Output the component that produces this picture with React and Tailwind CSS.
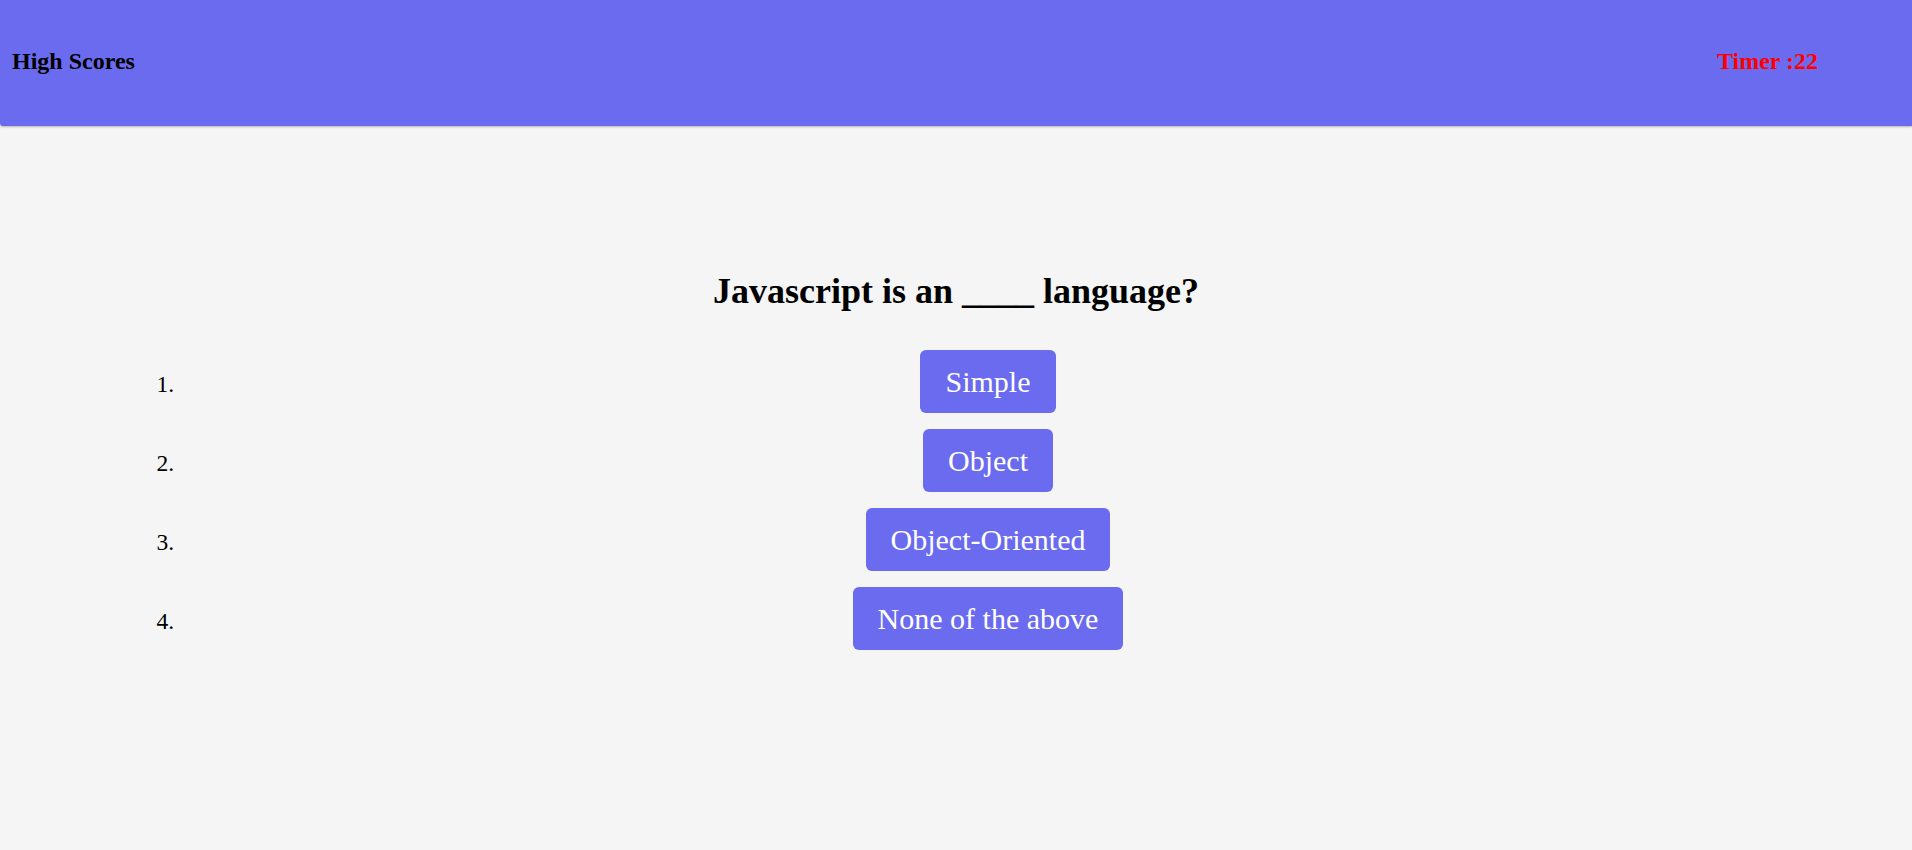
import { useState } from 'react'

const choices = ['Simple', 'Object', 'Object-Oriented', 'None of the above']

export default function App() {
  const [timer] = useState(22)

  return (
    <div className="min-h-screen bg-[#f5f5f5] font-['Liberation_Serif','Times_New_Roman',serif] text-black">
      {/* Top bar */}
      <header className="h-[126px] bg-[#6a6bef] flex items-center justify-between pl-3 pr-[94px] rounded-bl-[3px] shadow-[0_1px_2px_rgba(0,0,0,0.25)]">
        <h3 className="text-[24px] font-bold leading-[27px] -mt-1">High Scores</h3>
        <h3 className="text-[24px] font-bold leading-[27px] -mt-1 text-[#ff0000]">Timer :{timer}</h3>
      </header>

      {/* Question */}
      <main className="pt-[145px]">
        <h2 className="text-center text-[36px] font-bold leading-[40px]">Javascript is an ____ language?</h2>
        <ol className="list-decimal list-outside ml-[180px] mr-[116px] mt-[39px]">
          {choices.map(c => (
            <li key={c} className="text-center text-[23.5px] leading-[1.15] mb-4">
              <button className="inline-block bg-[#6a6bef] text-white text-[30px] leading-[35px] px-[25px] py-[14px] rounded-md">
                {c}
              </button>
            </li>
          ))}
        </ol>
      </main>
    </div>
  )
}
